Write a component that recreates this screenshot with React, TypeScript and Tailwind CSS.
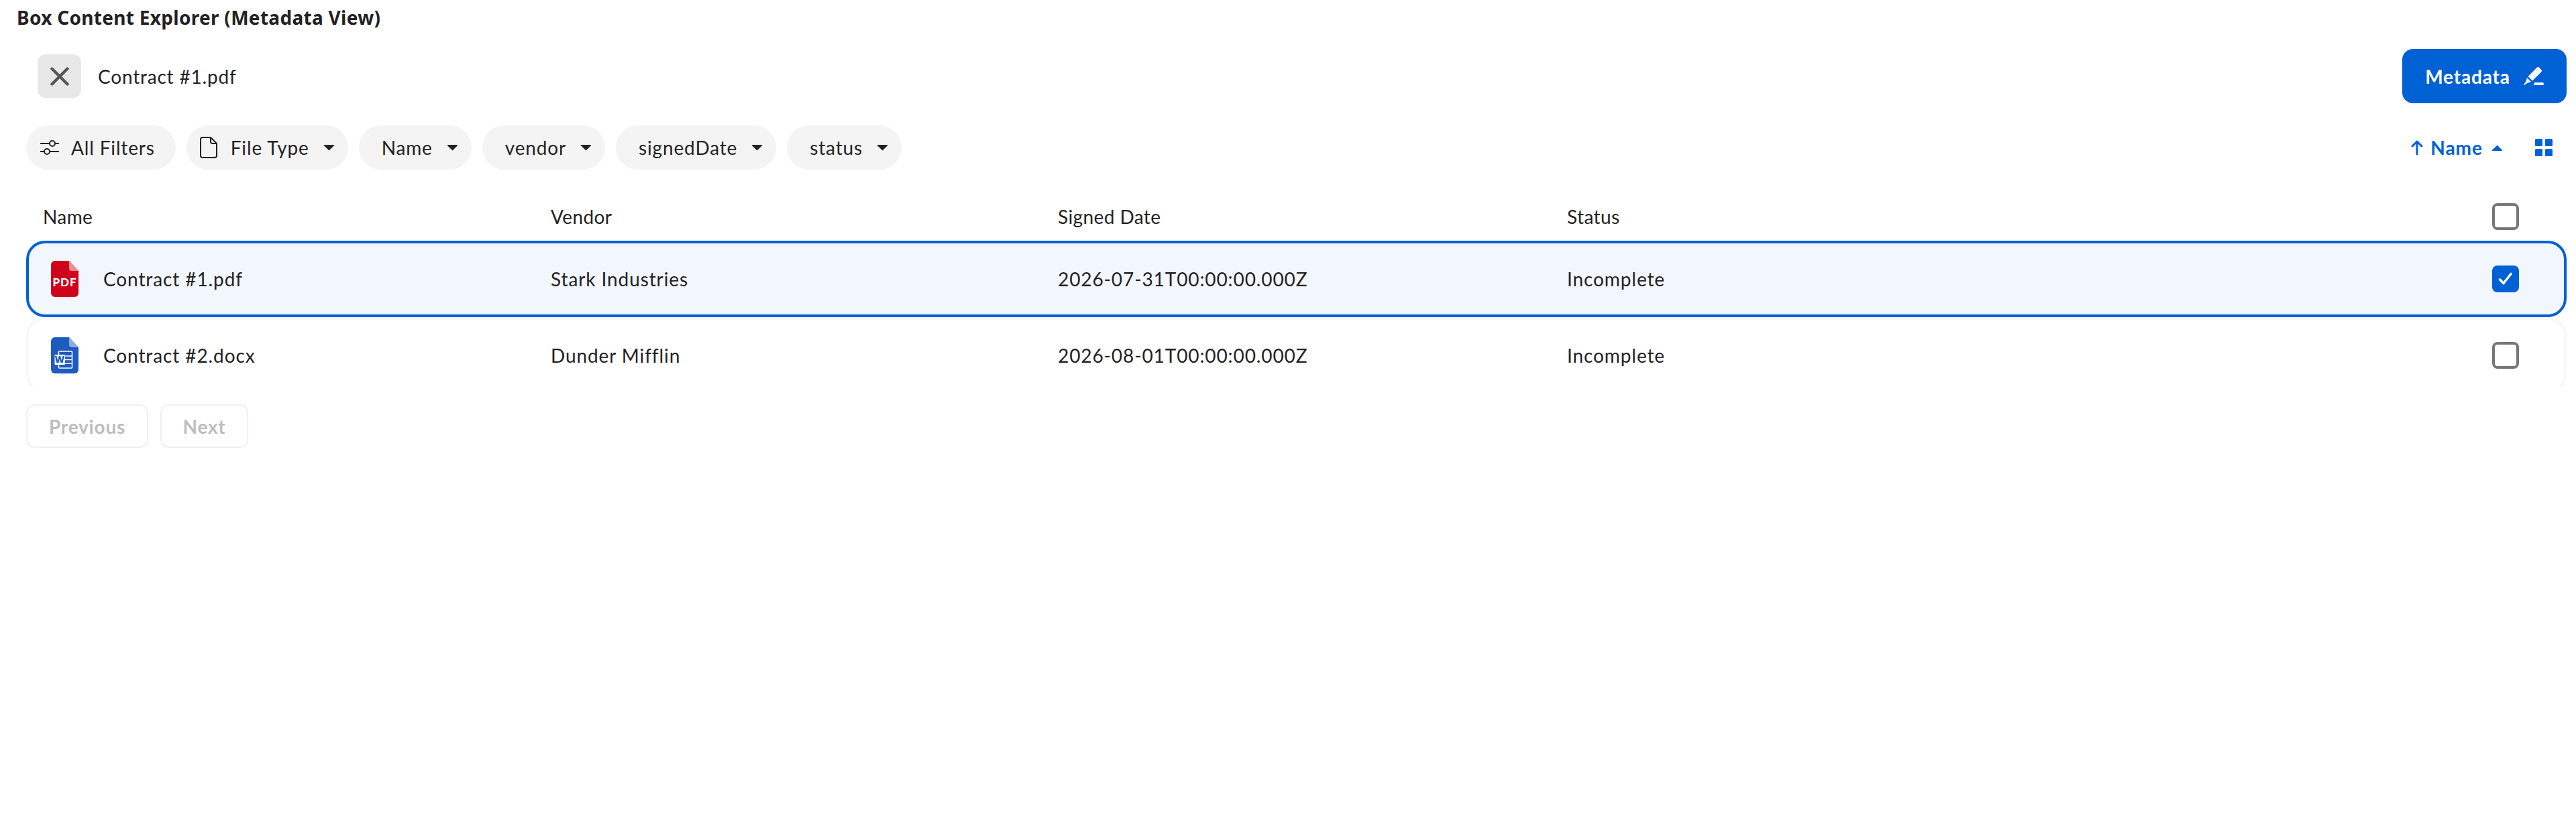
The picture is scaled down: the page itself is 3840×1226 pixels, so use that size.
import type { ReactNode } from "react";

const rowGrid = "grid grid-cols-[757px_756px_759px_1fr_40px] items-center";

const Caret = ({ up = false, className = "text-[#222222]" }: { up?: boolean; className?: string }) => (
  <svg viewBox="0 0 17 10" className={`h-[9px] w-[17px] ${className}`} fill="currentColor">
    {up ? <path d="M8.5 0.5 16.5 8.2a1 1 0 0 1-.7 1.8H1.2a1 1 0 0 1-.7-1.8Z" /> : <path d="M8.5 9.5.5 1.8A1 1 0 0 1 1.2 0h14.6a1 1 0 0 1 .7 1.8Z" />}
  </svg>
);

const FilterPill = ({ icon, label, caret = true }: { icon?: ReactNode; label: string; caret?: boolean }) => (
  <button className={`flex h-[66px] items-center rounded-[33px] bg-[#f4f4f4] text-[28px] tracking-[0.85px] text-[#222222] ${icon ? "pl-[20px]" : "pl-[34px]"} ${caret ? "pr-[20px]" : "pr-[31px]"}`}>
    {icon}
    <span>{label}</span>
    {caret && <span className="ml-[21px]"><Caret /></span>}
  </button>
);

const SlidersIcon = () => (
  <svg viewBox="0 0 30 28" className="mr-[17px] h-[28px] w-[30px]" fill="none" stroke="#222222" strokeWidth="2">
    <path d="M1 8h14M23 8h6M1 20h6M15 20h14" />
    <circle cx="19" cy="8" r="4" />
    <circle cx="11" cy="20" r="4" />
  </svg>
);

const FileIcon = () => (
  <svg viewBox="0 0 26 32" className="mr-[20px] h-[32px] w-[26px]" fill="none" stroke="#222222" strokeWidth="2" strokeLinejoin="round">
    <path d="M4 1h12l9 9v18a3 3 0 0 1-3 3H4a3 3 0 0 1-3-3V4a3 3 0 0 1 3-3Z" />
    <path d="M16 1v6a3 3 0 0 0 3 3h6" />
  </svg>
);

const PdfIcon = () => (
  <svg viewBox="0 0 41 54" className="h-[54px] w-[41px]">
    <path d="M6 0h21l14 15v33a6 6 0 0 1-6 6H6a6 6 0 0 1-6-6V6a6 6 0 0 1 6-6Z" fill="#d0021b" />
    <path d="M27 0l14 15H31a4 4 0 0 1-4-4Z" fill="#ec8f95" />
    <text x="20.5" y="38" textAnchor="middle" fontFamily="Lato" fontWeight="900" fontSize="17" fill="#ffffff">PDF</text>
  </svg>
);

const WordIcon = () => (
  <svg viewBox="0 0 41 54" className="h-[54px] w-[41px]">
    <path d="M6 0h21l14 15v33a6 6 0 0 1-6 6H6a6 6 0 0 1-6-6V6a6 6 0 0 1 6-6Z" fill="#1d5bbf" />
    <path d="M27 0l14 15H31a4 4 0 0 1-4-4Z" fill="#8eadde" />
    <rect x="11.5" y="21" width="20" height="25" rx="1" fill="none" stroke="#ffffff" strokeWidth="1.5" />
    <path d="M21 28h10M21 33.5h10M21 39h10" stroke="#ffffff" strokeWidth="1.5" />
    <rect x="5.5" y="26" width="15.5" height="15" rx="1" fill="#ffffff" />
    <text x="13.25" y="38" textAnchor="middle" fontFamily="Open Sans" fontWeight="800" fontSize="14" fill="#1d5bbf">W</text>
  </svg>
);

const Checkbox = ({ checked = false }: { checked?: boolean }) =>
  checked ? (
    <span className="flex h-[40px] w-[40px] items-center justify-center rounded-[8px] bg-[#0061d5]">
      <svg viewBox="0 0 24 24" className="h-[24px] w-[24px]" fill="none" stroke="#ffffff" strokeWidth="3.6" strokeLinecap="round" strokeLinejoin="round">
        <path d="M3.5 13 9 18.5 20 4.5" />
      </svg>
    </span>
  ) : (
    <span className="block h-[40px] w-[40px] rounded-[8px] border-[4px] border-[#767676] bg-white" />
  );

const files = [
  { name: "Contract #1.pdf", vendor: "Stark Industries", date: "2026-07-31T00:00:00.000Z", status: "Incomplete", selected: true, icon: <PdfIcon /> },
  { name: "Contract #2.docx", vendor: "Dunder Mifflin", date: "2026-08-01T00:00:00.000Z", status: "Incomplete", selected: false, icon: <WordIcon /> },
];

export default function App() {
  return (
    <div className="min-h-[1226px] bg-white pl-[25px] pr-[14px] text-[#222222] [font-family:Lato,sans-serif]">
      <h1 className="h-[52px] text-[28px] font-bold leading-[52px] tracking-[0.3px] text-[#222222] [font-family:'Noto_Sans',sans-serif]">
        Box Content Explorer (Metadata View)
      </h1>

      <div className="pl-[14px]">
        {/* Selection bar */}
        <div className="mt-[21px] flex h-[81px] items-center justify-between">
          <div className="ml-[17px] flex items-center gap-[25px]">
            <button className="flex h-[65px] w-[65px] items-center justify-center rounded-[12px] bg-[#e8e8e8]">
              <svg viewBox="0 0 28 28" className="h-[28px] w-[28px]" fill="none" stroke="#555555" strokeWidth="4.4" strokeLinecap="round">
                <path d="M2.5 2.5l23 23M25.5 2.5l-23 23" />
              </svg>
            </button>
            <span className="text-[28px] tracking-[0.8px]">Contract #1.pdf</span>
          </div>
          <button className="flex h-[81px] w-[245px] items-center justify-center gap-[20px] rounded-[16px] bg-[#0061d5] text-[28px] font-bold tracking-[0.8px] text-white">
            <span>Metadata</span>
            <svg viewBox="0 0 30 30" className="h-[30px] w-[30px]" fill="#ffffff">
              <path d="M20 1.5a2 2 0 0 1 2.8 0l3.7 3.7a2 2 0 0 1 0 2.8L13 21.5 6.5 15Z" />
              <path d="M5 17l6 6-5 1.5-5 3.5-.8-.8 3.3-5Z" />
              <rect x="15" y="24" width="15" height="4" rx="2" />
            </svg>
          </button>
        </div>

        {/* Filters */}
        <div className="mt-[33px] flex h-[66px] items-center justify-between">
          <div className="flex items-center gap-[16px]">
            <FilterPill icon={<SlidersIcon />} label="All Filters" caret={false} />
            <FilterPill icon={<FileIcon />} label="File Type" />
            <FilterPill label="Name" />
            <FilterPill label="vendor" />
            <FilterPill label="signedDate" />
            <FilterPill label="status" />
          </div>
          <div className="flex items-center gap-[48px] pr-[21px] text-[#0061d5]">
            <button className="flex items-center text-[28px] font-bold tracking-[1px] text-[#0061d5]">
              <svg viewBox="0 0 18 24" className="mr-[11px] h-[24px] w-[18px]" fill="none" stroke="currentColor" strokeWidth="3" strokeLinecap="round" strokeLinejoin="round">
                <path d="M9 22V3M2 10l7-7 7 7" />
              </svg>
              <span>Name</span>
              <span className="ml-[13px]"><Caret up className="text-[#0061d5]" /></span>
            </button>
            <svg viewBox="0 0 26 26" className="h-[26px] w-[26px]" fill="currentColor">
              <rect x="0" y="0" width="11" height="11" rx="1.5" />
              <rect x="15" y="0" width="11" height="11" rx="1.5" />
              <rect x="0" y="15" width="11" height="11" rx="1.5" />
              <rect x="15" y="15" width="11" height="11" rx="1.5" />
            </svg>
          </div>
        </div>

        {/* Table */}
        <div className={`${rowGrid} mb-[17px] mt-[49px] h-[40px] pl-[25px] pr-[71px] text-[28px] tracking-[0.4px]`}>
          <span>Name</span>
          <span>Vendor</span>
          <span>Signed Date</span>
          <span>Status</span>
          <Checkbox />
        </div>

        {files.map((file) => (
          <div
            key={file.name}
            className={`${rowGrid} h-[114px] rounded-[28px] border-[4px] pl-[21px] pr-[67px] text-[28px] tracking-[0.9px] ${
              file.selected ? "border-[#0061d5] bg-[#f2f6fd]" : "border-[#f8f8f8] border-b-transparent bg-white"
            }`}
          >
            <div className="ml-[12px] flex items-center gap-[37px]">
              {file.icon}
              <span>{file.name}</span>
            </div>
            <span>{file.vendor}</span>
            <span>{file.date}</span>
            <span>{file.status}</span>
            <Checkbox checked={file.selected} />
          </div>
        ))}

        {/* Pagination */}
        <div className="mt-[16px] flex gap-[18px]">
          <button className="h-[65px] w-[182px] rounded-[12px] border-2 border-[#f0f0f0] text-[28px] font-bold tracking-[0.8px] text-[#bdbdbd]">Previous</button>
          <button className="h-[65px] w-[131px] rounded-[12px] border-2 border-[#f0f0f0] text-[28px] font-bold tracking-[0.8px] text-[#bdbdbd]">Next</button>
        </div>
      </div>
    </div>
  );
}
